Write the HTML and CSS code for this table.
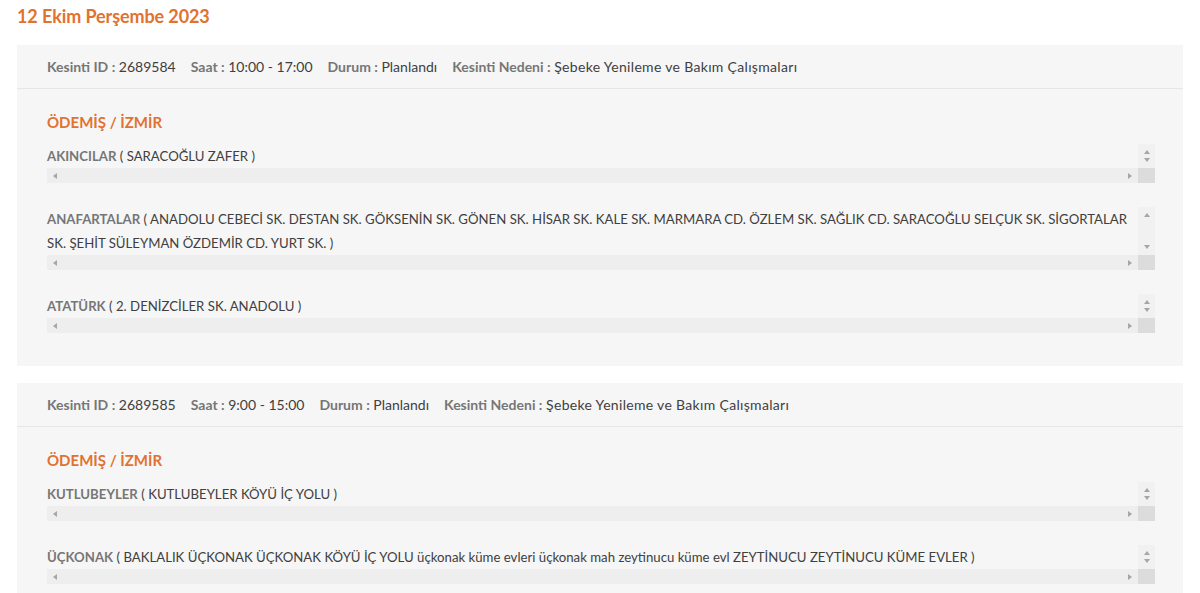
FILE: index.html
```html
<!DOCTYPE html>
<html lang="tr">
<head>
<meta charset="utf-8">
<title>Kesintiler</title>
<link rel="stylesheet" href="styles.css">
</head>
<body>
<h1 class="date-title">12 Ekim Perşembe 2023</h1>

<section class="card">
  <div class="card-head">
    <span class="field"><b>Kesinti ID :</b> 2689584</span>
    <span class="field"><b>Saat :</b> 10:00 - 17:00</span>
    <span class="field"><b>Durum :</b> Planlandı</span>
    <span class="field"><b>Kesinti Nedeni :</b> <span class="reason">Şebeke Yenileme ve Bakım Çalışmaları</span></span>
  </div>
  <div class="card-body">
    <h2 class="region">ÖDEMİŞ / İZMİR</h2>
    <div class="street">
      <div class="street-text"><b>AKINCILAR</b> <span>( SARACOĞLU ZAFER )</span></div>
      <div class="vbar"><i class="arr up"></i><i class="arr down"></i></div>
      <div class="hbar"><i class="arr left"></i><i class="arr right"></i></div>
      <div class="corner"></div>
    </div>
    <div class="street">
      <div class="street-text"><b>ANAFARTALAR</b> <span>( ANADOLU CEBECİ SK. DESTAN SK. GÖKSENİN SK. GÖNEN SK. HİSAR SK. KALE SK. MARMARA CD. ÖZLEM SK. SAĞLIK CD. SARACOĞLU SELÇUK SK. SİGORTALAR SK. ŞEHİT SÜLEYMAN ÖZDEMİR CD. YURT SK. )</span></div>
      <div class="vbar"><i class="arr up"></i><i class="arr down"></i></div>
      <div class="hbar"><i class="arr left"></i><i class="arr right"></i></div>
      <div class="corner"></div>
    </div>
    <div class="street">
      <div class="street-text"><b>ATATÜRK</b> <span>( 2. DENİZCİLER SK. ANADOLU )</span></div>
      <div class="vbar"><i class="arr up"></i><i class="arr down"></i></div>
      <div class="hbar"><i class="arr left"></i><i class="arr right"></i></div>
      <div class="corner"></div>
    </div>
  </div>
</section>

<section class="card">
  <div class="card-head">
    <span class="field"><b>Kesinti ID :</b> 2689585</span>
    <span class="field"><b>Saat :</b> 9:00 - 15:00</span>
    <span class="field"><b>Durum :</b> Planlandı</span>
    <span class="field"><b>Kesinti Nedeni :</b> <span class="reason">Şebeke Yenileme ve Bakım Çalışmaları</span></span>
  </div>
  <div class="card-body">
    <h2 class="region">ÖDEMİŞ / İZMİR</h2>
    <div class="street">
      <div class="street-text"><b>KUTLUBEYLER</b> <span>( KUTLUBEYLER KÖYÜ İÇ YOLU )</span></div>
      <div class="vbar"><i class="arr up"></i><i class="arr down"></i></div>
      <div class="hbar"><i class="arr left"></i><i class="arr right"></i></div>
      <div class="corner"></div>
    </div>
    <div class="street">
      <div class="street-text"><b>ÜÇKONAK</b> <span>( BAKLALIK ÜÇKONAK ÜÇKONAK KÖYÜ İÇ YOLU üçkonak küme evleri üçkonak mah zeytinucu küme evl ZEYTİNUCU ZEYTİNUCU KÜME EVLER )</span></div>
      <div class="vbar"><i class="arr up"></i><i class="arr down"></i></div>
      <div class="hbar"><i class="arr left"></i><i class="arr right"></i></div>
      <div class="corner"></div>
    </div>
  </div>
</section>
</body>
</html>
```

FILE: styles.css
```css
html, body {
  margin: 0;
  padding: 0;
  background: #ffffff;
}

body {
  padding: 0 17px;
  font-family: "Lato", "Open Sans", sans-serif;
  font-size: 14px;
  color: #404040;
}

.date-title {
  margin: 0 0 13px;
  height: 32px;
  line-height: 32px;
  font-size: 18px;
  font-weight: 700;
  color: #e1722f;
  letter-spacing: -0.1px;
}

.card {
  background: #f6f6f6;
  margin-bottom: 17px;
}

.card-head {
  display: flex;
  gap: 15px;
  height: 43px;
  align-items: center;
  padding: 0 30px;
  border-bottom: 1px solid #e6e6e6;
}

.reason {
  letter-spacing: 0.32px;
}

.field b,
.street-text b {
  font-weight: 700;
  color: #767676;
}

.card-body {
  padding: 22px 28px 9px 30px;
}

.region {
  margin: 0 0 11px;
  font-size: 15px;
  line-height: 22px;
  font-weight: 700;
  color: #e1722f;
}

.street {
  display: grid;
  grid-template-columns: 1fr 17px;
  grid-template-rows: auto 15px;
  margin-bottom: 24px;
}

.street-text {
  font-size: 13.2px;
  line-height: 24px;
}

.vbar {
  background: #f1f1f1;
  display: flex;
  flex-direction: column;
  justify-content: space-between;
  align-items: center;
  padding: 6px 0 6px;
}

.hbar {
  background: #eeeeee;
  display: flex;
  justify-content: space-between;
  align-items: center;
  padding: 0 6px;
}

.corner {
  background: #dcdcdc;
}

.arr {
  display: block;
  width: 0;
  height: 0;
}

.arr.up {
  border-left: 3.5px solid transparent;
  border-right: 3.5px solid transparent;
  border-bottom: 4px solid #a6a6a6;
}

.arr.down {
  border-left: 3.5px solid transparent;
  border-right: 3.5px solid transparent;
  border-top: 4px solid #a6a6a6;
}

.arr.left {
  border-top: 3.5px solid transparent;
  border-bottom: 3.5px solid transparent;
  border-right: 4px solid #a6a6a6;
}

.arr.right {
  border-top: 3.5px solid transparent;
  border-bottom: 3.5px solid transparent;
  border-left: 4px solid #a6a6a6;
}
```
